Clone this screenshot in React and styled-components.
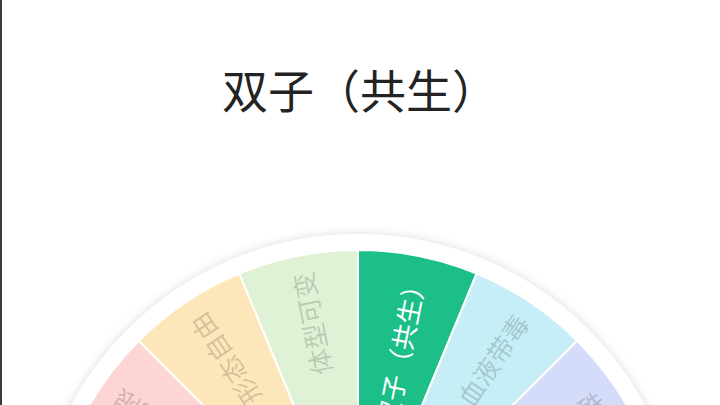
import React from 'react';
import styled, { createGlobalStyle } from 'styled-components';

const GlobalStyle = createGlobalStyle`
  html, body {
    margin: 0;
    padding: 0;
    background: #fff;
  }
  body {
    font-family: "Noto Sans CJK SC", "Noto Sans", sans-serif;
  }
`;

const SIZE = 680;
const C = SIZE / 2;
const RIM = 326;
const R = 310;
const TEXT_END = 293;

const slices = [
  { label: '双子（共生）', color: '#1cbf88', text: '#ffffff' },
  { label: '血液带毒', color: '#c5eef6' },
  { label: '体质特殊', color: '#d5dcf9' },
  { label: '寿命无限', color: '#fdd5d4' },
  { label: '形态自由', color: '#fde6b9' },
  { label: '体型可变', color: '#dff2d5' },
  { label: '血液带毒', color: '#c5eef6' },
  { label: '体质特殊', color: '#d5dcf9' },
  { label: '寿命无限', color: '#fdd5d4' },
  { label: '形态自由', color: '#fde6b9' },
  { label: '体型可变', color: '#dff2d5' },
  { label: '血液带毒', color: '#c5eef6' },
  { label: '体质特殊', color: '#d5dcf9' },
  { label: '寿命无限', color: '#fdd5d4' },
  { label: '形态自由', color: '#fde6b9' },
  { label: '体型可变', color: '#dff2d5' },
];

const STEP = 360 / slices.length;

// angle measured clockwise from straight up
const point = (deg, r) => {
  const rad = (deg * Math.PI) / 180;
  return [C + r * Math.sin(rad), C - r * Math.cos(rad)];
};

const slicePath = (from, to) => {
  const [x1, y1] = point(from, R);
  const [x2, y2] = point(to, R);
  return `M ${C} ${C} L ${x1} ${y1} A ${R} ${R} 0 0 1 ${x2} ${y2} Z`;
};

function Wheel() {
  return (
    <WheelSvg width={SIZE} height={SIZE} viewBox={`0 0 ${SIZE} ${SIZE}`}>
      <defs>
        <filter id="rimShadow" x="-10%" y="-10%" width="120%" height="120%">
          <feDropShadow dx="0" dy="0" stdDeviation="5" floodColor="#000" floodOpacity="0.15" />
        </filter>
      </defs>
      <circle cx={C} cy={C} r={RIM} fill="#fff" filter="url(#rimShadow)" />
      {slices.map((s, i) => {
        const from = i * STEP;
        return (
          <path
            key={`s${i}`}
            d={slicePath(from, from + STEP)}
            fill={s.color}
            stroke="#fff"
            strokeWidth="2"
            strokeLinejoin="round"
          />
        );
      })}
      {slices.map((s, i) => {
        const mid = i * STEP + STEP / 2;
        return (
          <SliceLabel
            key={`t${i}`}
            x={C + TEXT_END}
            y={C}
            textAnchor="end"
            dominantBaseline="central"
            transform={`rotate(${mid - 90} ${C} ${C})`}
            fill={s.text || 'rgba(0,0,0,0.18)'}
          >
            {s.label}
          </SliceLabel>
        );
      })}
    </WheelSvg>
  );
}

export default function App() {
  return (
    <>
      <GlobalStyle />
      <Screen>
        <Title>双子（共生）</Title>
        <Stage>
          <Wheel />
        </Stage>
      </Screen>
    </>
  );
}

const Screen = styled.div`
  width: 720px;
  height: 405px;
  box-sizing: border-box;
  border-left: 2px solid #3a3a3a;
  overflow: hidden;
  display: flex;
  flex-direction: column;
  background: #fff;
`;

const Title = styled.h1`
  margin: 58px 0 0;
  padding-right: 2px;
  font-family: "Noto Sans CJK SC", "Noto Sans", sans-serif;
  font-size: 46px;
  font-weight: 400;
  line-height: 60px;
  color: #232323;
  text-align: center;
`;

const Stage = styled.div`
  display: flex;
  padding-left: 16px;
  margin-top: 102px;
`;

const WheelSvg = styled.svg`
  flex-shrink: 0;
  display: block;
`;

const SliceLabel = styled.text`
  font-family: "Noto Sans CJK SC", "Noto Sans", sans-serif;
  font-size: 26px;
`;
